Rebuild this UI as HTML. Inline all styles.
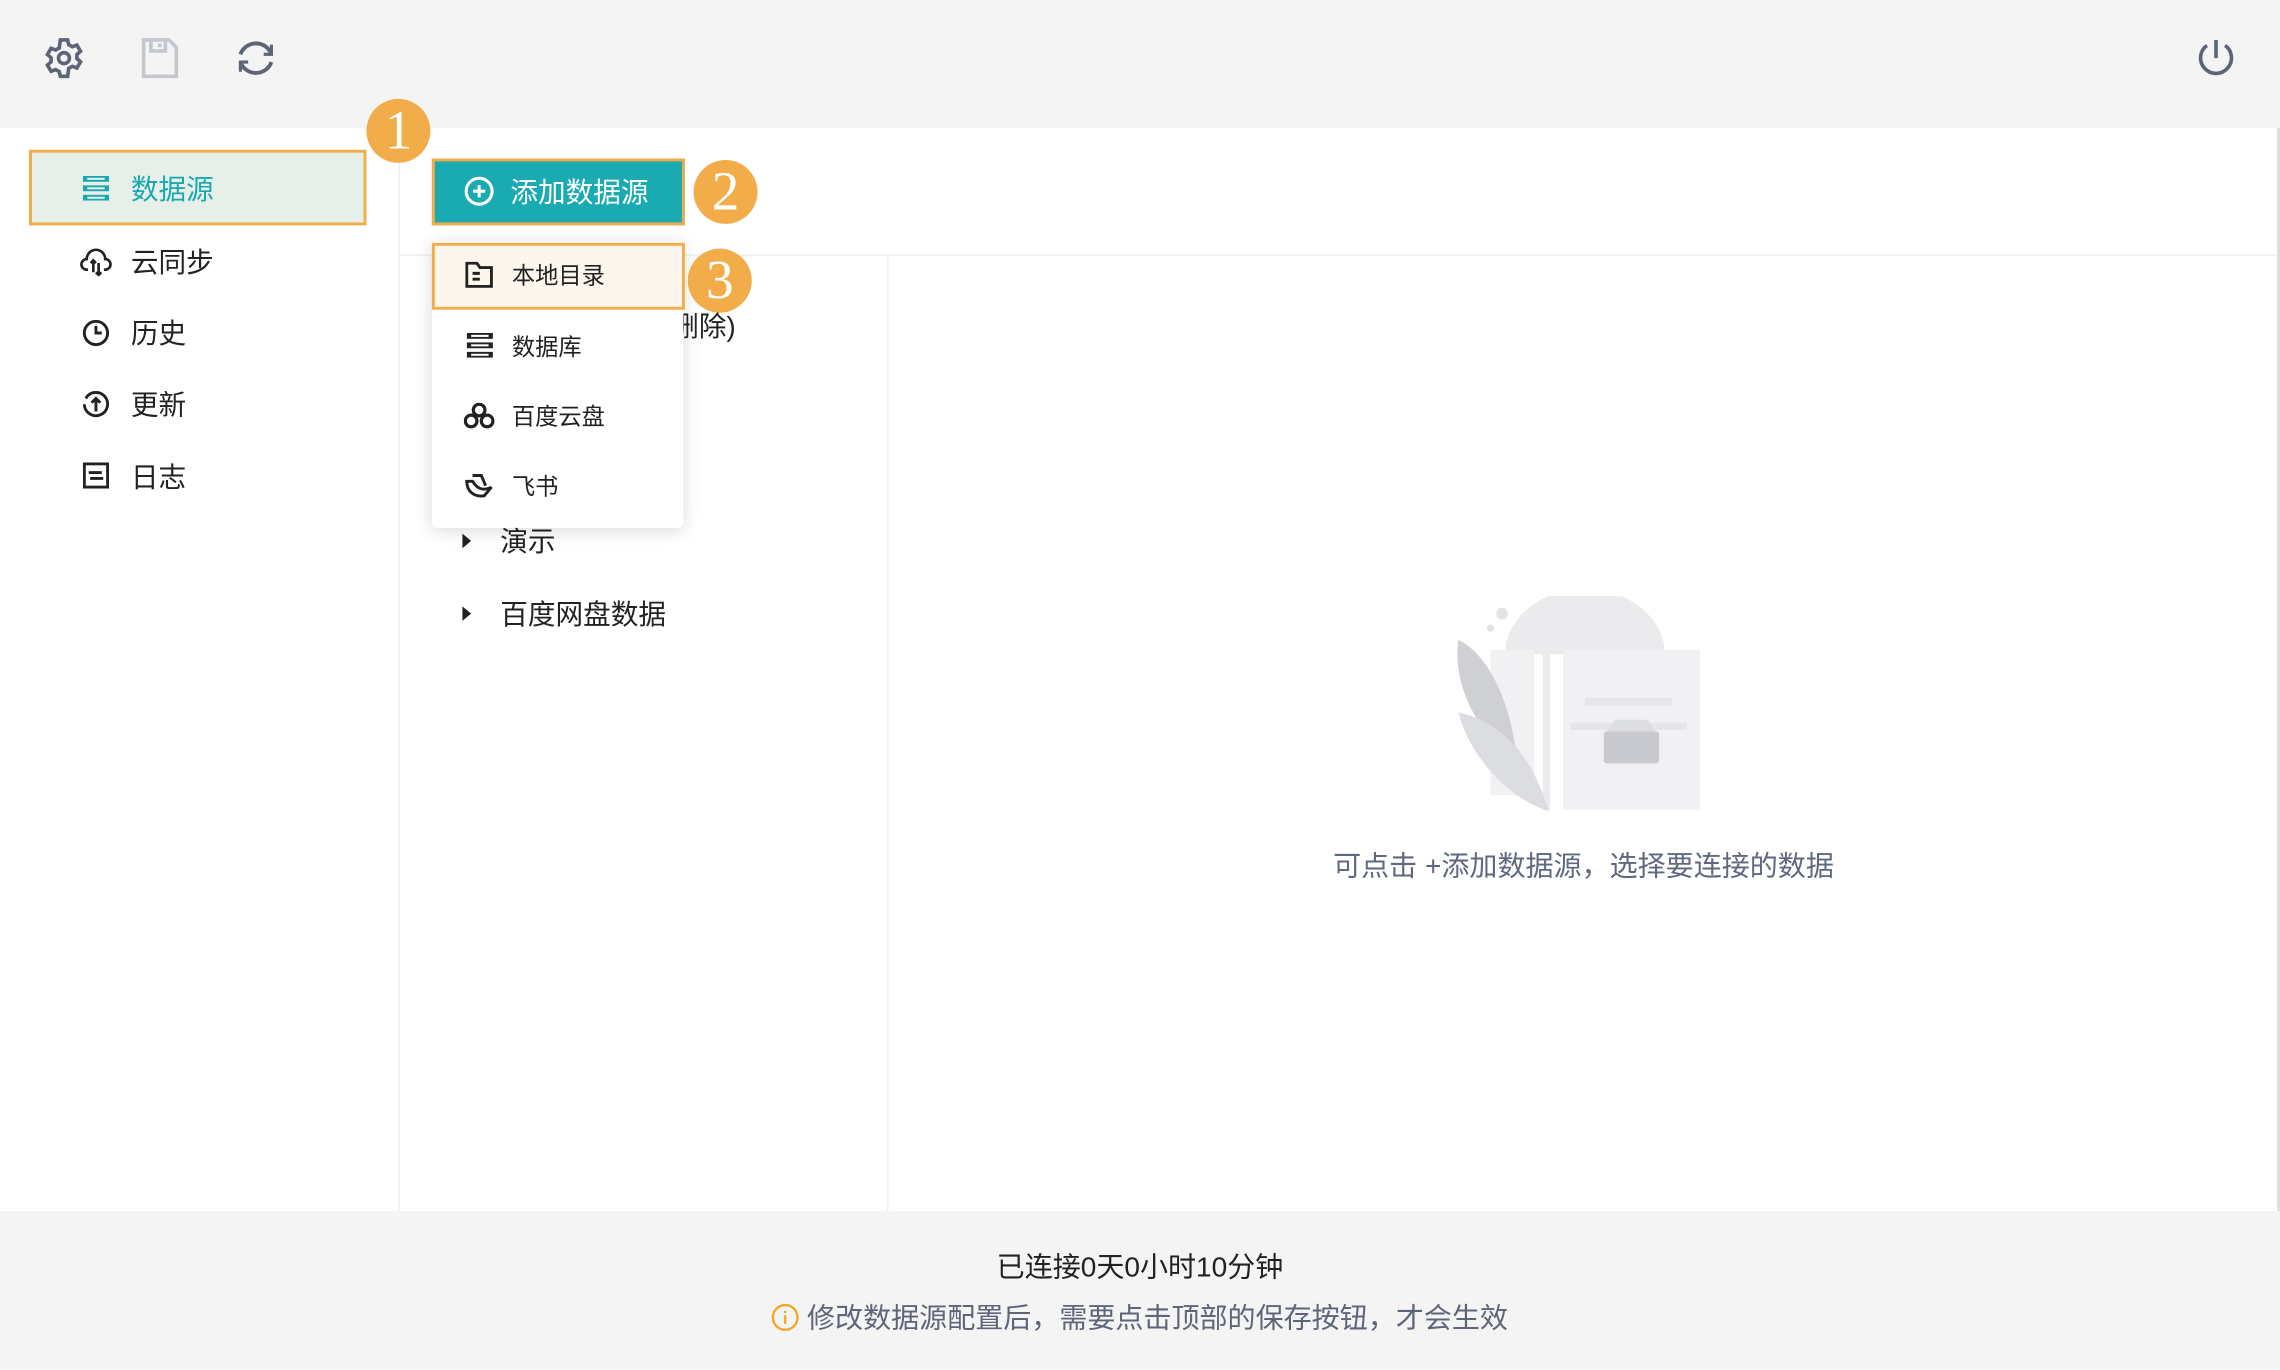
<!DOCTYPE html>
<html><head><meta charset="utf-8">
<style>
html,body{margin:0;padding:0;width:2280px;height:1370px;overflow:hidden;background:#fff}
#w{position:absolute;left:0;top:0;width:1568px;height:942px;transform:scale(1.45408);transform-origin:0 0;font-family:"Liberation Sans","Noto Sans CJK SC",sans-serif;color:#222}
.a{position:absolute}
.top{left:0;top:0;width:1568px;height:88px;background:#f4f4f4}
.foot{left:0;top:833px;width:1568px;height:109px;background:#f4f4f4}
.nav{font-size:19px;line-height:24px}
.badge{width:44px;height:44px;border-radius:50%;background:#f2ad4a;color:#fff;font-family:"Liberation Serif",serif;font-size:38px;line-height:44px;text-align:center}
.mi{font-size:16px;line-height:20px}
</style></head><body><div id="w">
<div class="a top"></div>
<svg class="a" style="left:29px;top:25px" width="30" height="30" viewBox="0 0 24 24" fill="none" stroke="#5e6478" stroke-width="2"><path d="M10 2h4l.6 2.6 2 1.1 2.5-.9 2 3.4-2 1.8v2.2l2 1.8-2 3.4-2.5-.9-2 1.1L14 22h-4l-.6-2.6-2-1.1-2.5.9-2-3.4 2-1.8v-2.2l-2-1.8 2-3.4 2.5.9 2-1.1z"/><circle cx="12" cy="12" r="3"/></svg>
<svg class="a" style="left:95px;top:25px" width="30" height="30" viewBox="0 0 24 24" fill="none" stroke="#c4c6d0" stroke-width="2"><path d="M3 2h14l4 4v16H3z"/><path d="M7 2v6h8V2M12 4v2"/></svg>
<svg class="a" style="left:160px;top:24px" width="32" height="32" viewBox="0 0 24 24" fill="none" stroke="#5e6478" stroke-width="2"><path d="M4 10a8.5 8.5 0 0 1 16 0M20 14a8.5 8.5 0 0 1-16 0"/><path d="M20 5v5h-4M4 19v-5h4" stroke-width="1.6"/></svg>
<svg class="a" style="left:1509px;top:25px" width="30" height="30" viewBox="0 0 24 24" fill="none" stroke="#5e6478" stroke-width="2"><path d="M12 2v10M7 5a8.5 8.5 0 1 0 10 0"/></svg>
<div class="a" style="left:1566px;top:88px;width:2px;height:745px;background:#ddd"></div>
<div class="a" style="left:274px;top:88px;width:1px;height:745px;background:#eee"></div>
<div class="a" style="left:20px;top:103px;width:228px;height:48px;background:#e6f0e9;border:2px solid #f2ad4a"></div>
<svg class="a" style="left:57px;top:121px" width="18" height="17" viewBox="0 0 18 17" fill="#1aa8b0"><rect x="0" y="0" width="18" height="4"/><rect x="0" y="6.5" width="18" height="4"/><rect x="0" y="13" width="18" height="4"/><rect x="3" y="1.3" width="12" height="1.4" fill="#e6f0e9"/><rect x="3" y="7.8" width="12" height="1.4" fill="#e6f0e9"/><rect x="3" y="14.3" width="12" height="1.4" fill="#e6f0e9"/></svg>
<div class="a nav" style="left:90px;top:120px;color:#1aa8b0">数据源</div>
<svg class="a" style="left:55px;top:170px" width="22" height="20" viewBox="0 0 24 22" fill="none" stroke="#222" stroke-width="2"><path d="M6 17H5a4 4 0 0 1 0-8 7 7 0 0 1 14 0 4 4 0 0 1 0 8h-1"/><path d="M10 10v9M14 12v9M8 12l2-2 2 2M12 19l2 2 2-2"/></svg>
<div class="a nav" style="left:90px;top:170px">云同步</div>
<svg class="a" style="left:56px;top:219px" width="20" height="20" viewBox="0 0 20 20" fill="none" stroke="#222" stroke-width="2"><circle cx="10" cy="10" r="8"/><path d="M10 5v5h4"/></svg>
<div class="a nav" style="left:90px;top:219px">历史</div>
<svg class="a" style="left:56px;top:268px" width="20" height="20" viewBox="0 0 20 20" fill="none" stroke="#222" stroke-width="2"><path d="M3 6a8 8 0 1 1-1 4"/><path d="M10 15V6M7 9l3-3 3 3"/></svg>
<div class="a nav" style="left:90px;top:268px">更新</div>
<svg class="a" style="left:57px;top:318px" width="18" height="18" viewBox="0 0 18 18" fill="none" stroke="#222" stroke-width="2"><rect x="1" y="1" width="16" height="16"/><path d="M4 7h9M5 11h9"/></svg>
<div class="a nav" style="left:90px;top:318px">日志</div>
<div class="a badge" style="left:252px;top:68px">1</div>
<div class="a" style="left:275px;top:175px;width:1291px;height:1px;background:#eee"></div>
<div class="a" style="left:610px;top:176px;width:1px;height:657px;background:#eee"></div>
<div class="a" style="left:297px;top:109px;width:170px;height:42px;background:#1aabb2;border:2px solid #f2ad4a"></div>
<svg class="a" style="left:319px;top:121px" width="21" height="21" viewBox="0 0 20 20" fill="none" stroke="#fff" stroke-width="2"><circle cx="10" cy="10" r="8.5"/><path d="M10 6v8M6 10h8"/></svg>
<div class="a nav" style="left:351px;top:122px;color:#fff">添加数据源</div>
<div class="a badge" style="left:477px;top:110px">2</div>
<div class="a nav" style="left:206px;top:214px;width:300px;text-align:right">本地数据(可删除)</div>
<svg class="a" style="left:317px;top:366px" width="8" height="12"><path d="M1 1l6 5-6 5z" fill="#222"/></svg>
<div class="a nav" style="left:344px;top:362px">演示</div>
<svg class="a" style="left:317px;top:416px" width="8" height="12"><path d="M1 1l6 5-6 5z" fill="#222"/></svg>
<div class="a nav" style="left:344px;top:412px">百度网盘数据</div>
<div class="a" style="left:297px;top:166px;width:173px;height:197px;background:#fff;border-radius:4px;box-shadow:0 2px 12px rgba(0,0,0,.15)"></div>
<div class="a" style="left:297px;top:167px;width:170px;height:42px;background:#fdf6ec;border:2px solid #f2ad4a"></div>
<svg class="a" style="left:320px;top:180px" width="19" height="18" viewBox="0 0 19 18" fill="none" stroke="#222" stroke-width="2"><path d="M1 1h7l2 3h8v13H1z"/><path d="M5 8h5M5 12h5"/></svg>
<div class="a mi" style="left:352px;top:181px">本地目录</div>
<svg class="a" style="left:321px;top:229px" width="18" height="17" viewBox="0 0 18 17" fill="#222"><rect x="0" y="0" width="18" height="4"/><rect x="0" y="6.5" width="18" height="4"/><rect x="0" y="13" width="18" height="4"/><rect x="3" y="1.3" width="12" height="1.4" fill="#fff"/><rect x="3" y="7.8" width="12" height="1.4" fill="#fff"/><rect x="3" y="14.3" width="12" height="1.4" fill="#fff"/></svg>
<div class="a mi" style="left:352px;top:230px">数据库</div>
<svg class="a" style="left:319px;top:277px" width="21" height="18" viewBox="0 0 21 18" fill="none" stroke="#222" stroke-width="2.2"><circle cx="10.5" cy="5" r="4"/><circle cx="5" cy="12.5" r="4"/><circle cx="16" cy="12.5" r="4"/></svg>
<div class="a mi" style="left:352px;top:278px">百度云盘</div>
<svg class="a" style="left:319px;top:325px" width="21" height="18" viewBox="0 0 21 18" fill="none" stroke="#222" stroke-width="2"><path d="M2 6c0 7 5 11 12 10l5-6c-6 3-10 1-13-4z"/><path d="M6 2h6l3 7"/></svg>
<div class="a mi" style="left:352px;top:326px">飞书</div>
<div class="a badge" style="left:473px;top:171px">3</div>
<svg class="a" style="left:995px;top:410px" width="180" height="150" viewBox="0 0 180 150">
<path d="M40 40a55 45 0 0 1 110 0z" fill="#ebebee"/>
<circle cx="38" cy="12" r="4" fill="#e3e3e6"/><circle cx="30" cy="22" r="2.5" fill="#e3e3e6"/>
<rect x="30" y="37" width="30" height="100" fill="#f1f1f3"/>
<rect x="66" y="27" width="5" height="120" fill="#ebebee"/>
<rect x="80" y="37" width="94" height="110" fill="#f1f1f4"/>
<rect x="95" y="70" width="60" height="5" fill="#e6e6e8"/><rect x="85" y="87" width="80" height="5" fill="#e6e6e8"/>
<path d="M8 30c20 10 35 40 40 80-25-10-45-50-40-80z" fill="#cfd0d4"/>
<path d="M8 80c25 5 50 25 62 68-30-10-55-40-62-68z" fill="#dcdde0"/>
<rect x="108" y="93" width="38" height="22" rx="2" fill="#c9cacf"/>
<path d="M110 93l6-8h22l6 8z" fill="#dcdde0"/>
</svg>
<div class="a" style="left:869px;top:585px;width:440px;text-align:center;font-size:19.3px;line-height:24px;color:#606880">可点击 +添加数据源，选择要连接的数据</div>
<div class="a foot"></div>
<div class="a" style="left:584px;top:861px;width:400px;text-align:center;font-size:19.3px;line-height:24px;color:#222">已连接0天0小时10分钟</div>
<svg class="a" style="left:530px;top:896px" width="20" height="20" viewBox="0 0 20 20" fill="none" stroke="#f5a623" stroke-width="1.6"><circle cx="10" cy="10" r="8.5"/><path d="M10 8.5v6M10 5.5v1.5"/></svg>
<div class="a" style="left:555px;top:896px;font-size:19.3px;line-height:24px;color:#5f6578">修改数据源配置后，需要点击顶部的保存按钮，才会生效</div>
</div></body></html>
